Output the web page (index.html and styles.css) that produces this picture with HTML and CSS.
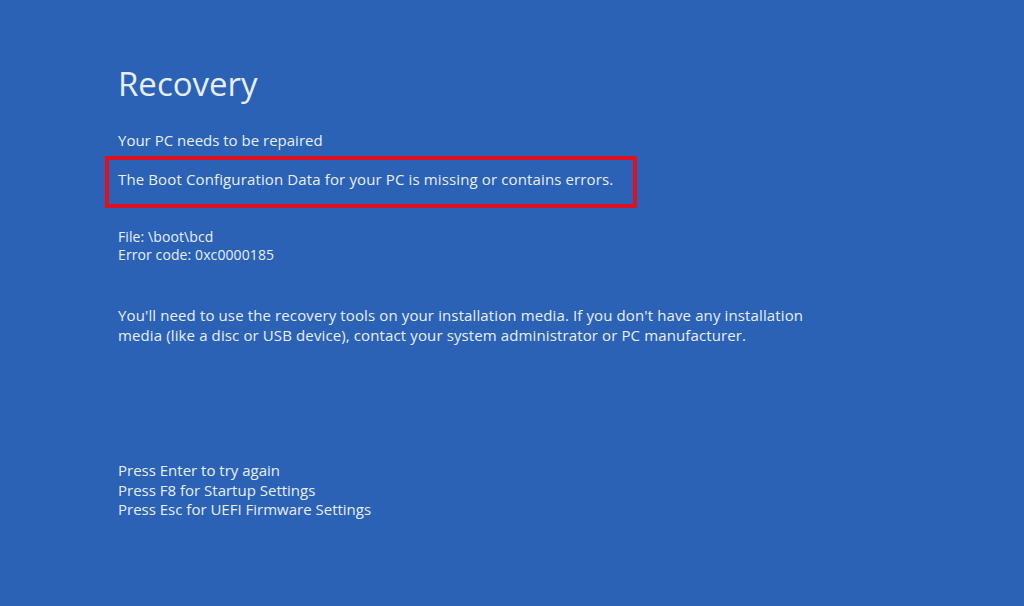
FILE: index.html
```html
<!DOCTYPE html>
<html lang="en">
<head>
<meta charset="utf-8">
<title>Recovery</title>
<link rel="stylesheet" href="styles.css">
</head>
<body>
<main class="screen">
  <h1 class="title">Recovery</h1>
  <p class="lead">Your PC needs to be repaired</p>
  <div class="highlight">
    <p class="line">The Boot Configuration Data for your PC is missing or contains errors.</p>
  </div>
  <div class="meta">
    <p class="meta-line">File: \boot\bcd</p>
    <p class="meta-line">Error code: 0xc0000185</p>
  </div>
  <p class="para">You'll need to use the recovery tools on your installation media. If you don't have any installation<br>media (like a disc or USB device), contact your system administrator or PC manufacturer.</p>
  <div class="keys">
    <p class="key">Press Enter to try again</p>
    <p class="key">Press F8 for Startup Settings</p>
    <p class="key">Press Esc for UEFI Firmware Settings</p>
  </div>
</main>
</body>
</html>
```
FILE: styles.css
```css
html, body {
  margin: 0;
  padding: 0;
  height: 100%;
}
body {
  background: #2c62b6;
  color: #e6eef9;
  font-family: "Open Sans", "Noto Sans", sans-serif;
  font-size: 15px;
  overflow: hidden;
}
.screen {
  padding: 64px 0 0 118px;
}
p {
  margin: 0;
}
.title {
  margin: 0;
  font-size: 33px;
  font-weight: 400;
  line-height: 40px;
  height: 40px;
}
.lead {
  margin-top: 26px;
  line-height: 20px;
}
.highlight {
  margin-top: 6px;
  margin-left: -13px;
  width: 532px;
  box-sizing: border-box;
  border: 4px solid #df1121;
  padding: 9px 9px 15px;
}
.line {
  line-height: 20px;
  letter-spacing: 0.13px;
}
.meta {
  margin-top: 20px;
  font-size: 14px;
  letter-spacing: 0.1px;
}
.meta-line {
  line-height: 18px;
}
.para {
  margin-top: 41px;
  line-height: 20px;
  letter-spacing: 0.12px;
}
.keys {
  margin-top: 116px;
}
.key {
  line-height: 19.5px;
}
```
